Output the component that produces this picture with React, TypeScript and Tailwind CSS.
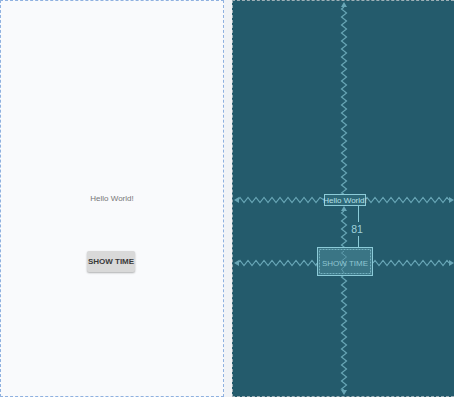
import React from "react";

// zigzag "spring" used by the blueprint for centred constraints
function zigH(x1: number, x2: number, y: number, step = 4, amp = 2.5) {
  let d = `M${x1} ${y}`;
  let up = true;
  for (let x = x1 + step / 2; x < x2; x += step) {
    d += ` L${x.toFixed(1)} ${up ? y - amp : y + amp}`;
    up = !up;
  }
  d += ` L${x2} ${y}`;
  return d;
}

function zigV(y1: number, y2: number, x: number, step = 4, amp = 2.5) {
  let d = `M${x} ${y1}`;
  let left = true;
  for (let y = y1 + step / 2; y < y2; y += step) {
    d += ` L${left ? x - amp : x + amp} ${y.toFixed(1)}`;
    left = !left;
  }
  d += ` L${x} ${y2}`;
  return d;
}

const spring = "#68a6b6";
const box = "#8ccbd8";

function Blueprint() {
  return (
    <svg
      className="absolute inset-0"
      width="221"
      height="396"
      viewBox="0 0 221 396"
      fontFamily="'Liberation Sans', Arial, sans-serif"
    >
      {/* vertical springs */}
      <path d={zigV(6, 193, 111)} fill="none" stroke={spring} strokeWidth="1.2" />
      <path d="M111 1 L108 6 L114 6 Z" fill={spring} />
      <path d={zigV(210, 389, 111)} fill="none" stroke={spring} strokeWidth="1.2" />
      <path d="M111 205 L108 210 L114 210 Z" fill={spring} />
      <path d="M111 394 L108 389 L114 389 Z" fill={spring} />

      {/* horizontal springs - hello */}
      <path d={zigH(5, 91, 199)} fill="none" stroke={spring} strokeWidth="1.2" />
      <path d="M1 199 L6 196 L6 202 Z" fill={spring} />
      <path d={zigH(132, 216, 199)} fill="none" stroke={spring} strokeWidth="1.2" />
      <path d="M221 199 L216 196 L216 202 Z" fill={spring} />

      {/* horizontal springs - button */}
      <path d={zigH(5, 84, 262)} fill="none" stroke={spring} strokeWidth="1.2" />
      <path d="M1 262 L6 259 L6 265 Z" fill={spring} />
      <path d={zigH(140, 216, 262)} fill="none" stroke={spring} strokeWidth="1.2" />
      <path d="M221 262 L216 259 L216 265 Z" fill={spring} />

      {/* hello world box */}
      <rect x="91.5" y="193.5" width="41" height="11" fill="#2e6878" stroke={box} strokeWidth="1" />
      <text x="112" y="202.3" fontSize="8" fill="#b4e0e8" textAnchor="middle">
        Hello World!
      </text>

      {/* margin indicator */}
      <line x1="125.5" y1="205" x2="125.5" y2="221" stroke={box} strokeWidth="1" />
      <line x1="125.5" y1="235" x2="125.5" y2="247" stroke={box} strokeWidth="1" />
      <text x="124" y="232" fontSize="10.5" fill="#9fd0da" textAnchor="middle">
        81
      </text>

      {/* button box */}
      <rect x="84.5" y="246.5" width="55" height="28" fill="#3a7585" stroke={box} strokeWidth="1" />
      <rect
        x="86.5"
        y="248.5"
        width="51"
        height="24"
        fill="none"
        stroke={box}
        strokeWidth="1"
        strokeDasharray="2 1"
        opacity="0.7"
      />
      <path d={zigV(250, 272, 111)} fill="none" stroke={spring} strokeWidth="1" opacity="0.8" />
      <text x="112" y="265" fontSize="8" fill="#8ec5d1" textAnchor="middle">
        SHOW TIME
      </text>
    </svg>
  );
}

export default function App() {
  return (
    <div
      className="flex h-[397px] w-[454px] bg-[#f1f3f6]"
      style={{ fontFamily: "'Liberation Sans', Arial, sans-serif" }}
    >
      <div className="flex h-full w-[224px] flex-col items-center border border-dashed border-[#8fb1e0] bg-[#f9fafc]">
        <p className="mt-[192px] text-[8px] leading-[12px] text-[#777]">Hello World!</p>
        <button
          type="button"
          className="ml-[-2px] mt-[46px] flex h-[21px] w-[48px] items-center justify-center rounded-[2px] bg-[#d9d9d9] text-[8px] font-bold text-[#3a3a3a] shadow-[0_1px_2px_rgba(0,0,0,0.3)]"
        >
          SHOW TIME
        </button>
      </div>
      <div className="ml-[8px] h-full flex-1 border-l border-t border-b border-dashed border-[#9fb0b7] bg-[#245b6c]">
        <div className="relative h-full w-full">
          <Blueprint />
        </div>
      </div>
    </div>
  );
}
